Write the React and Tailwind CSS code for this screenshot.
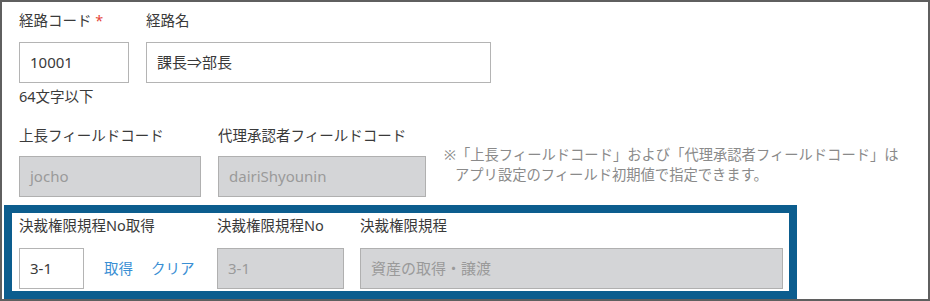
const font = { fontFamily: '"Noto Sans", "Noto Sans CJK JP", sans-serif' };

function Label({ children, className = "" }) {
  return (
    <div className={`text-[14.5px] leading-[20px] text-[#3a3a3a] whitespace-nowrap ${className}`}>
      {children}
    </div>
  );
}

function TextBox({ value, width, disabled = false }) {
  return (
    <div
      className={`h-[41px] flex items-center pl-[10px] border text-[15px] whitespace-nowrap ${width} ${
        disabled
          ? "bg-[#d4d5d7] border-[#b0b0b0] text-[#9a9a9a]"
          : "bg-white border-[#b4b4b4] text-[#3a3a3a]"
      }`}
    >
      {value}
    </div>
  );
}

export default function App() {
  return (
    <div
      style={font}
      className="w-[930px] h-[301px] bg-white border-2 border-[#5f5f5f] box-border overflow-hidden"
    >
      {/* 経路コード / 経路名 */}
      <div className="pl-[17px] pt-[8px] flex gap-[17px]">
        <div className="w-[110px]">
          <Label>
            経路コード <span className="text-[#e5453a]">*</span>
          </Label>
          <TextBox value="10001" width="w-[110px] mt-[12px]" />
          <Label className="mt-[3px]">64文字以下</Label>
        </div>
        <div className="w-[345px]">
          <Label>経路名</Label>
          <TextBox value="課長⇒部長" width="w-[345px] mt-[12px]" />
        </div>
      </div>

      {/* 上長 / 代理承認者 */}
      <div className="pl-[17px] mt-[19px] flex">
        <div className="w-[182px]">
          <Label>上長フィールドコード</Label>
          <TextBox value="jocho" width="w-[182px] mt-[11px]" disabled />
        </div>
        <div className="w-[208px] ml-[17px]">
          <Label>代理承認者フィールドコード</Label>
          <TextBox value="dairiShyounin" width="w-[208px] mt-[11px]" disabled />
        </div>
        <div className="ml-[18px] mt-[20px] text-[14.3px] leading-[20px] text-[#8a8a8a] whitespace-nowrap">
          <div>※「上長フィールドコード」および「代理承認者フィールドコード」は</div>
          <div className="pl-[11px]">アプリ設定のフィールド初期値で指定できます。</div>
        </div>
      </div>

      {/* 決裁権限規程 */}
      <div className="ml-[2px] mt-[8px] w-[793px] h-[94px] border-[8px] border-[#0c5d8e] box-border pl-[7px] pt-[2px] flex">
        <div className="w-[198px]">
          <Label>決裁権限規程No取得</Label>
          <div className="mt-[13px] flex items-center">
            <TextBox value="3-1" width="w-[65px]" />
            <span className="ml-[20px] text-[14.5px] text-[#3a8fd4]">取得</span>
            <span className="ml-[18px] text-[14.5px] text-[#3a8fd4]">クリア</span>
          </div>
        </div>
        <div className="w-[143px]">
          <Label>決裁権限規程No</Label>
          <TextBox value="3-1" width="w-[127px] mt-[13px]" disabled />
        </div>
        <div className="w-[423px]">
          <Label>決裁権限規程</Label>
          <TextBox value="資産の取得・譲渡" width="w-[423px] mt-[13px]" disabled />
        </div>
      </div>
    </div>
  );
}
